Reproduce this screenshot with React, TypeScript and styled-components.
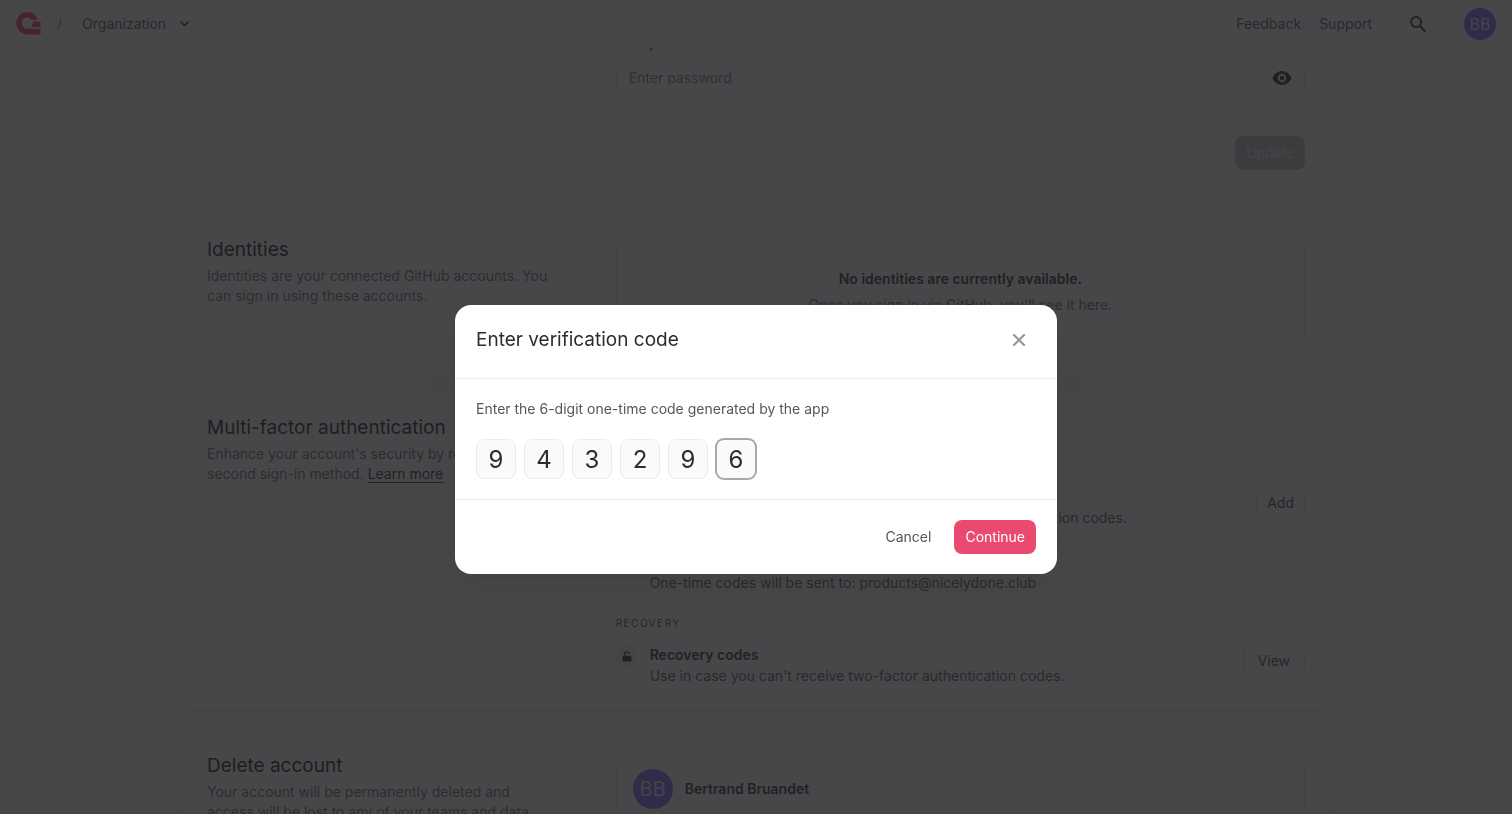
import React, { useState } from 'react';
import styled, { createGlobalStyle, css } from 'styled-components';

const sans = `Inter, "Liberation Sans", sans-serif`;
const line = '#e6e6ea';

const GlobalStyle = createGlobalStyle`
  *, *::before, *::after { box-sizing: border-box; }
  body {
    margin: 0;
    background: #f8f8f9;
    color: #56565c;
    font-family: ${sans};
    font-size: 14px;
    line-height: 20px;
  }
  button, input { font: inherit; color: inherit; }
  h1, h2, h3, p { margin: 0; }
`;

const Page = styled.div`
  height: 100vh;
  overflow: hidden;
`;

const TopBar = styled.header`
  position: relative;
  z-index: 1;
  display: flex;
  align-items: center;
  justify-content: space-between;
  height: 48px;
  padding: 0 16px;
  background: #ffffff;
  border-bottom: 1px solid ${line};
`;

const BarGroup = styled.div`
  display: flex;
  align-items: center;
`;

const HomeLink = styled.a`
  display: flex;
`;

const Slash = styled.span`
  margin: 0 20px 0 16px;
  color: #818186;
`;

const OrgButton = styled.button`
  display: flex;
  align-items: center;
  gap: 14px;
  padding: 0;
  border: 0;
  background: none;
`;

const BarLink = styled.a`
  margin-right: 18px;
  color: inherit;
  text-decoration: none;
`;

const IconButton = styled.button`
  display: flex;
  align-items: center;
  justify-content: center;
  padding: 0;
  border: 0;
  background: none;
  color: #2d2d31;
`;

const SearchButton = styled(IconButton)`
  width: 32px;
  height: 32px;
  margin: 0 30px 0 12px;
`;

const Avatar = styled.span<{ $size: number }>`
  display: flex;
  align-items: center;
  justify-content: center;
  width: ${p => p.$size}px;
  height: ${p => p.$size}px;
  border-radius: 50%;
  background: #7c67fe;
  color: #e4e1fb;
  font-size: ${p => p.$size / 2}px;
`;

const Content = styled.main`
  display: flex;
  flex-direction: column;
  gap: 18px;
  width: calc(100% - 368px);
  max-width: 1144px;
  margin: -39px auto 0;
`;

const Card = styled.section`
  border-radius: 12px;
  background: #ffffff;
  box-shadow: 0 0 0 1px ${line};
`;

const CardGrid = styled.div`
  display: grid;
  grid-template-columns: 1fr 2fr;
  align-items: start;
  gap: 64px;
  padding: 24px 23px;
`;

const CardTitle = styled.h2`
  margin-bottom: 2px;
  color: #19191c;
  font-size: 19px;
  font-weight: 400;
  line-height: 28px;
`;

const Muted = styled.p`
  color: #6c6c71;
`;

const LearnMore = styled.a`
  color: #2d2d31;
  text-underline-offset: 3px;
`;

const FieldLabel = styled.label`
  display: block;
  margin-bottom: 8px;
  color: #2d2d31;
`;

const PasswordBox = styled.div`
  display: flex;
  align-items: center;
  height: 34px;
  padding: 0 12px;
  border: 1px solid ${line};
  border-radius: 8px;
`;

const PasswordInput = styled.input`
  flex: 1;
  padding: 0;
  border: 0;
  outline: 0;
  background: none;
  &::placeholder { color: #818186; opacity: 1; }
`;

const PasswordGrid = styled(CardGrid)`
  padding-bottom: 20px;
`;

const CardFooter = styled.div`
  display: flex;
  justify-content: flex-end;
  padding: 20px 23px 24px;
  border-top: 1px solid ${line};
`;

const Button = styled.button<{ $kind: 'primary' | 'disabled' | 'outline' | 'text'; $wide?: boolean }>`
  height: 34px;
  padding: 0 11px;
  border: 0;
  border-radius: 8px;
  background: none;
  ${p => p.$kind === 'primary' && css`
    background: #eb4a70;
    color: #ffffff;
  `}
  ${p => p.$kind === 'disabled' && css`
    background: #c3c3c6;
    color: #ededf0;
  `}
  ${p => p.$kind === 'outline' && css`
    padding: 0 ${p.$wide ? 14 : 10}px;
    border: 1px solid ${line};
    color: #414146;
  `}
`;

const EmptyBox = styled.div`
  display: flex;
  flex-direction: column;
  align-items: center;
  gap: 6px;
  padding: 32px;
  border: 1px solid ${line};
  border-radius: 12px;
`;

const Strong = styled.h3`
  color: #2d2d31;
  font-size: 14px;
  font-weight: 600;
  line-height: 20px;
`;

const SwitchLabel = styled.label`
  display: flex;
  align-items: center;
  gap: 12px;
  height: 24px;
  margin-bottom: 19px;
`;

const Overline = styled.h3`
  margin-bottom: 13px;
  color: #414146;
  font-size: 10px;
  font-weight: 400;
  line-height: 16px;
  letter-spacing: 1.5px;
  text-transform: uppercase;
`;

const Factor = styled.div`
  display: flex;
  align-items: flex-start;
  gap: 12px;
`;

const FactorDot = styled.span`
  display: flex;
  align-items: center;
  justify-content: center;
  width: 22px;
  height: 22px;
  margin-top: 1px;
  border-radius: 50%;
  background: #f4f4f7;
  color: #2d2d31;
`;

const FactorText = styled.div`
  flex: 1;
  line-height: 21px;
  & > h3 { line-height: 21px; }
`;

const Rule = styled.hr`
  margin: 11px 0;
  border: 0;
  border-top: 1px solid ${line};
`;

const FactorGroup = styled.div`
  margin-bottom: 22px;
`;

const UserBox = styled.div`
  display: flex;
  align-items: center;
  gap: 12px;
  padding: 16px;
  border: 1px solid ${line};
  border-radius: 12px;
`;

const Scrim = styled.div`
  position: fixed;
  inset: 0;
  z-index: 10;
  display: flex;
  align-items: center;
  justify-content: center;
  padding: 65px 16px 0;
  background: rgba(31, 31, 33, 0.82);
`;

const Dialog = styled.form`
  width: 100%;
  max-width: 602px;
  border-radius: 16px;
  background: #ffffff;
  box-shadow: 0 16px 32px rgba(20, 20, 24, 0.06);
`;

const DialogHeader = styled.header`
  display: flex;
  align-items: center;
  justify-content: space-between;
  padding: 21px 21px 24px;
  border-bottom: 1px solid #ededf0;
`;

const DialogTitle = styled.h1`
  color: #2d2d31;
  font-size: 19px;
  font-weight: 400;
  line-height: 28px;
`;

const CloseButton = styled(IconButton)`
  width: 34px;
  height: 28px;
  color: #97979b;
`;

const DialogBody = styled.div`
  display: flex;
  flex-direction: column;
  gap: 20px;
  padding: 20px 21px;
`;

const CodeRow = styled.div`
  display: flex;
  gap: 8px;
`;

const Digit = styled.input<{ $active: boolean }>`
  width: 40px;
  height: 40px;
  padding: 0;
  border: 1px solid #ededf0;
  border-radius: 8px;
  outline: 0;
  background: #fafafb;
  color: #2d2d31;
  font-size: 24px;
  text-align: center;
  ${p => p.$active && css`
    border-color: #a8a8ab;
    box-shadow: 0 0 0 1px #a8a8ab;
  `}
`;

const DialogFooter = styled.footer`
  display: flex;
  justify-content: flex-end;
  gap: 12px;
  padding: 20px 21px;
  border-top: 1px solid #ededf0;
`;

const Logo = () => (
  <svg width="25" height="23" viewBox="0 0 25 23" fill="#fd366e" aria-hidden="true">
    <path d="M24.5 16.8V22.4H11.2C7.3 22.4 3.9 20.3 2.1 17.1C0.9 15.2 0.2 12.9 0.2 11.2C0.2 5 5.1 0 11.2 0C16 0 20 2.9 21.7 7.8H15.2C14.3 6.4 12.9 5.6 11.2 5.6C8.2 5.6 5.8 8.1 5.8 11.2C5.8 14.2 8.2 16.8 11.2 16.8Z" />
    <path d="M24.5 9.5V15H15.2C16.3 13.9 16.9 12.6 16.9 11.2C16.9 10.6 16.8 10 16.6 9.5Z" />
  </svg>
);

const ChevronDown = () => (
  <svg width="9" height="6" viewBox="0 0 9 6" fill="none" stroke="#2d2d31" strokeWidth="1.7" strokeLinecap="round" strokeLinejoin="round" aria-hidden="true">
    <path d="M1 1l3.5 3.5L8 1" />
  </svg>
);

const SearchIcon = () => (
  <svg width="18" height="18" viewBox="0 0 18 18" fill="none" stroke="currentColor" aria-hidden="true">
    <circle cx="7.2" cy="7" r="5.1" strokeWidth="1.9" />
    <path d="M11 11l5.4 5.4" strokeWidth="2.1" />
  </svg>
);

const EyeIcon = () => (
  <svg width="20" height="16" viewBox="0 0 20 16" fill="currentColor" fillRule="evenodd" aria-hidden="true">
    <path d="M10 1C5.8 1 2.2 3.9 0.5 8C2.2 12.1 5.8 15 10 15S17.8 12.1 19.5 8C17.8 3.9 14.2 1 10 1ZM10 12.2A4.2 4.2 0 1 1 10 3.8A4.2 4.2 0 0 1 10 12.2Z" />
    <circle cx="10" cy="8" r="2.3" />
  </svg>
);

const UnlockIcon = () => (
  <svg width="10" height="11" viewBox="0 0 10 11" fill="none" aria-hidden="true">
    <rect x="0.5" y="4.8" width="9" height="5.7" rx="1.3" fill="currentColor" />
    <path d="M2.4 5V3.3A2.5 2.5 0 0 1 7.2 2.4" stroke="currentColor" strokeWidth="1.2" strokeLinecap="round" />
  </svg>
);

const CloseIcon = () => (
  <svg width="14" height="14" viewBox="0 0 14 14" stroke="currentColor" strokeWidth="2.2" strokeLinecap="round" aria-hidden="true">
    <path d="M2 2l10 10M12 2L2 12" />
  </svg>
);

export default function App() {
  const [code, setCode] = useState(['9', '4', '3', '2', '9', '6']);
  const [active, setActive] = useState(5);

  const setDigit = (index: number, value: string) =>
    setCode(code.map((digit, i) => (i === index ? value.slice(-1) : digit)));

  return (
    <>
      <GlobalStyle />
      <Page>
        <TopBar>
          <BarGroup>
            <HomeLink href="#" aria-label="Home"><Logo /></HomeLink>
            <Slash>/</Slash>
            <OrgButton type="button">Organization <ChevronDown /></OrgButton>
          </BarGroup>
          <BarGroup>
            <BarLink href="#">Feedback</BarLink>
            <BarLink href="#">Support</BarLink>
            <SearchButton type="button" aria-label="Search"><SearchIcon /></SearchButton>
            <Avatar $size={32}>BB</Avatar>
          </BarGroup>
        </TopBar>

        <Content>
          <Card>
            <PasswordGrid>
              <div />
              <div>
                <FieldLabel htmlFor="password">New password</FieldLabel>
                <PasswordBox>
                  <PasswordInput id="password" type="password" placeholder="Enter password" />
                  <IconButton type="button" aria-label="Show password"><EyeIcon /></IconButton>
                </PasswordBox>
              </div>
            </PasswordGrid>
            <CardFooter>
              <Button type="button" $kind="disabled" disabled>Update</Button>
            </CardFooter>
          </Card>

          <Card>
            <CardGrid>
              <div>
                <CardTitle>Identities</CardTitle>
                <Muted>Identities are your connected GitHub accounts. You can sign in using these accounts.</Muted>
              </div>
              <EmptyBox>
                <Strong>No identities are currently available.</Strong>
                <Muted>Once you sign in via GitHub, you'll see it here.</Muted>
              </EmptyBox>
            </CardGrid>
          </Card>

          <Card>
            <CardGrid>
              <div>
                <CardTitle>Multi-factor authentication</CardTitle>
                <Muted>
                  Enhance your account's security by requiring a second sign-in method.{' '}
                  <LearnMore href="#">Learn more</LearnMore>
                </Muted>
              </div>
              <div>
                <SwitchLabel><input type="checkbox" defaultChecked /> Multi-factor authentication</SwitchLabel>
                <Overline>Types</Overline>
                <FactorGroup>
                  <Factor>
                    <FactorDot />
                    <FactorText>
                      <Strong>Authenticator app</Strong>
                      Use an authenticator app on your device to create authentication codes.
                    </FactorText>
                    <Button type="button" $kind="outline">Add</Button>
                  </Factor>
                  <Rule />
                  <Factor>
                    <FactorDot />
                    <FactorText>
                      <Strong>Email</Strong>
                      One-time codes will be sent to: products@nicelydone.club
                    </FactorText>
                  </Factor>
                </FactorGroup>
                <Overline>Recovery</Overline>
                <Factor>
                  <FactorDot><UnlockIcon /></FactorDot>
                  <FactorText>
                    <Strong>Recovery codes</Strong>
                    Use in case you can't receive two-factor authentication codes.
                  </FactorText>
                  <Button type="button" $kind="outline" $wide>View</Button>
                </Factor>
              </div>
            </CardGrid>
          </Card>

          <Card>
            <CardGrid>
              <div>
                <CardTitle>Delete account</CardTitle>
                <Muted>
                  Your account will be permanently deleted and access will be lost to any of your teams and data.
                  This action is irreversible.
                </Muted>
              </div>
              <UserBox>
                <Avatar $size={40}>BB</Avatar>
                <Strong>Bertrand Bruandet</Strong>
              </UserBox>
            </CardGrid>
          </Card>
        </Content>
      </Page>

      <Scrim>
        <Dialog role="dialog" aria-modal="true" aria-labelledby="dialog-title" onSubmit={e => e.preventDefault()}>
          <DialogHeader>
            <DialogTitle id="dialog-title">Enter verification code</DialogTitle>
            <CloseButton type="button" aria-label="Close"><CloseIcon /></CloseButton>
          </DialogHeader>
          <DialogBody>
            <p>Enter the 6-digit one-time code generated by the app</p>
            <CodeRow>
              {code.map((digit, i) => (
                <Digit
                  key={i}
                  $active={i === active}
                  inputMode="numeric"
                  aria-label={`Digit ${i + 1}`}
                  value={digit}
                  onFocus={() => setActive(i)}
                  onChange={e => setDigit(i, e.target.value)}
                />
              ))}
            </CodeRow>
          </DialogBody>
          <DialogFooter>
            <Button type="button" $kind="text">Cancel</Button>
            <Button type="submit" $kind="primary">Continue</Button>
          </DialogFooter>
        </Dialog>
      </Scrim>
    </>
  );
}
